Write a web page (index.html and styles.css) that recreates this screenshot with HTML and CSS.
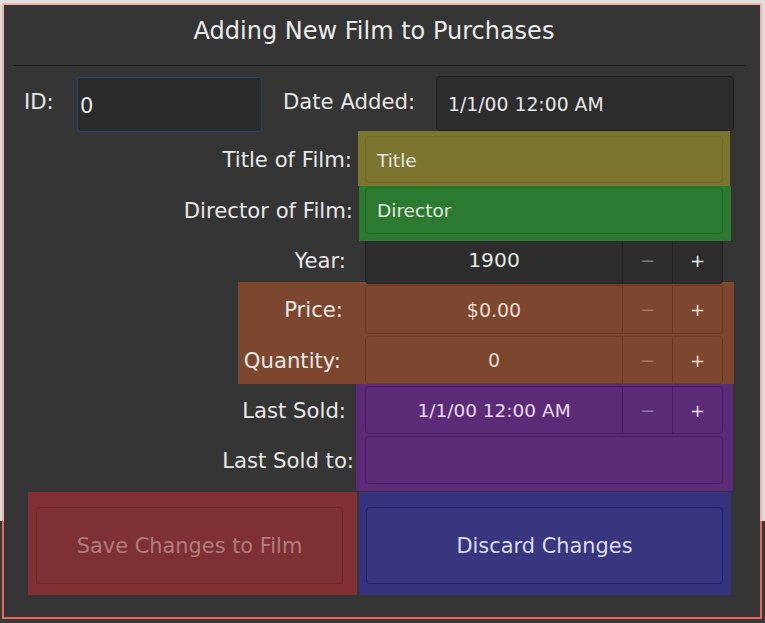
FILE: index.html
```html
<!DOCTYPE html>
<html>
<head>
<meta charset="utf-8">
<link rel="stylesheet" href="styles.css">
</head>
<body>
<div class="frame">
  <h1 class="title">Adding New Film to Purchases</h1>
  <div class="sep"></div>
  <div class="top-row">
    <span class="lbl id-lbl">ID:</span>
    <div class="id-input">0</div>
    <span class="lbl date-lbl">Date Added:</span>
    <div class="date-input">1/1/00 12:00 AM</div>
  </div>
  <div class="form">
    <div class="row row-title">
      <div class="lbl-cell">Title of Film:</div>
      <div class="cell olive"><div class="field">Title</div></div>
    </div>
    <div class="row row-director">
      <div class="lbl-cell">Director of Film:</div>
      <div class="cell green"><div class="field">Director</div></div>
    </div>
    <div class="row row-year">
      <div class="lbl-cell">Year:</div>
      <div class="spin spin-year">
        <div class="val val-year">1900</div>
        <div class="sbtn minus">−</div>
        <div class="sbtn plus">+</div>
      </div>
    </div>
    <div class="orange-block">
      <div class="sub-row sub-price">
        <div class="lbl-cell">Price:</div>
        <div class="spin spin-tint">
          <div class="val">$0.00</div>
          <div class="sbtn minus">−</div>
          <div class="sbtn plus">+</div>
        </div>
      </div>
      <div class="sub-row sub-qty">
        <div class="lbl-cell">Quantity:</div>
        <div class="spin spin-tint">
          <div class="val">0</div>
          <div class="sbtn minus">−</div>
          <div class="sbtn plus">+</div>
        </div>
      </div>
    </div>
    <div class="row row-lastsold">
      <div class="lbl-cell">Last Sold:</div>
      <div class="cell purple">
        <div class="spin spin-tint">
          <div class="val val-small">1/1/00 12:00 AM</div>
          <div class="sbtn minus">−</div>
          <div class="sbtn plus">+</div>
        </div>
      </div>
    </div>
    <div class="row row-lastsoldto">
      <div class="lbl-cell">Last Sold to:</div>
      <div class="cell purple"><div class="field field-tint"></div></div>
    </div>
  </div>
  <div class="buttons">
    <div class="btn-cell red"><div class="btn btn-save">Save Changes to Film</div></div>
    <div class="btn-cell blue"><div class="btn btn-discard">Discard Changes</div></div>
  </div>
</div>
</body>
</html>
```
FILE: styles.css
```css
* { box-sizing: border-box; }

html, body {
  margin: 0;
  padding: 0;
}

body {
  width: 765px;
  height: 623px;
  overflow: hidden;
  background: linear-gradient(to bottom, #dedede 0, #dedede 521px, #383838 521px);
  font-family: "DejaVu Sans", "Liberation Sans", sans-serif;
  color: #e8e8e8;
}

.frame {
  width: 760px;
  height: 616px;
  margin: 3px 0 0 2px;
  border: 2px solid transparent;
  background:
    linear-gradient(#353535, #353535) padding-box,
    linear-gradient(to bottom, #f5b2aa 0, #f5b2aa 518px, #e8685e 518px) border-box;
}

.title {
  margin: 0;
  height: 52px;
  line-height: 52px;
  padding-right: 16px;
  font-size: 24px;
  font-weight: normal;
  text-align: center;
  color: #ececec;
}

.sep {
  height: 1px;
  margin: 8px 15px 0 10px;
  background: #1c1c1c;
}

.top-row {
  display: flex;
  align-items: center;
  height: 55px;
  margin-top: 11px;
  padding-left: 20px;
}

.lbl {
  font-size: 21.2px;
  margin-bottom: 6px;
  white-space: nowrap;
}

.id-lbl { width: 53px; }

.id-input {
  width: 185px;
  height: 55px;
  background: #2b2b2b;
  border: 1px solid #234572;
  border-radius: 3px;
  font-size: 21px;
  padding-left: 2px;
  display: flex;
  align-items: center;
  padding-top: 2px;
}

.date-lbl { margin-left: 21px; }

.date-input {
  width: 298px;
  height: 55px;
  margin-left: 21px;
  margin-bottom: 2px;
  background: #2d2d2d;
  border: 1px solid #1d1d1d;
  border-radius: 4px;
  font-size: 18.8px;
  padding-left: 11px;
  padding-top: 2px;
  display: flex;
  align-items: center;
}

.form { margin-top: -1px; }

.row { display: flex; }

.lbl-cell {
  display: flex;
  align-items: center;
  justify-content: flex-end;
  font-size: 21.2px;
  white-space: nowrap;
}

.field {
  width: 358px;
  height: 47px;
  border-radius: 4px;
  border: 1px solid rgba(0, 0, 0, 0.1);
  font-size: 18.5px;
  padding-left: 11px;
  display: flex;
  align-items: center;
  color: #e6e6e0;
}

/* Title */
.row-title { height: 55px; }
.row-title .lbl-cell { width: 354px; padding-right: 6px; padding-top: 2px; }
.olive {
  width: 372px;
  background: #7b7530;
  padding: 5px 7px 3px 7px;
}
.olive .field { padding-top: 2px; }

/* Director */
.row-director { height: 55px; }
.row-director .lbl-cell { width: 355px; padding-right: 6px; padding-bottom: 6px; }
.green {
  width: 372px;
  background: #2b7a30;
  padding: 1px 8px 7px 6px;
}
.green .field { border-color: rgba(0, 40, 0, 0.2); }

/* spin boxes */
.spin {
  display: flex;
  width: 358px;
  height: 48px;
  border-radius: 4px;
  border: 1px solid rgba(0, 0, 0, 0.12);
}

.val {
  flex: 0 0 256px;
  display: flex;
  align-items: center;
  justify-content: center;
  font-size: 19px;
}

.val-small { font-size: 18.5px; }

.sbtn {
  flex: 1 1 50px;
  display: flex;
  align-items: center;
  justify-content: center;
  border-left: 1px solid rgba(0, 0, 0, 0.12);
  font-size: 18px;
}

.plus { color: #ececec; }

/* Year */
.row-year { height: 41px; align-items: flex-start; }
.row-year .lbl-cell { width: 355px; height: 41px; padding-right: 13px; padding-bottom: 2px; }
.spin-year {
  margin-left: 6px;
  height: 43px;
  background: #2d2d2d;
  border-color: #202020;
  border-top: none;
  border-radius: 0 0 4px 4px;
}
.spin-year .sbtn { border-left-color: #222222; }
.val-year { font-size: 20.3px; padding-bottom: 4px; }
.spin-year .sbtn { padding-bottom: 4px; }
.spin-year .minus { color: #7c7c7c; }

/* Orange */
.orange-block {
  margin-left: 234px;
  width: 496px;
  height: 102px;
  background: #7c472e;
  padding-top: 3px;
  display: flex;
  flex-direction: column;
  gap: 2px;
}
.sub-row { display: flex; }
.sub-row .lbl-cell { width: 121px; }
.sub-price .lbl-cell { padding-right: 16px; }
.sub-qty .lbl-cell { padding-right: 18px; }
.sub-row .spin { margin-left: 6px; }
.sub-price .spin { height: 49px; }
.orange-block .spin { border-color: rgba(90, 30, 0, 0.35); }
.orange-block .sbtn { border-left-color: rgba(90, 30, 0, 0.35); }
.orange-block .minus { color: #a67c66; }
.orange-block .val, .orange-block .plus { color: #ecdcd4; }

/* Purple */
.row-lastsold { height: 52px; }
.row-lastsold .lbl-cell { width: 352px; padding-right: 10px; }
.row-lastsoldto { height: 55px; }
.row-lastsoldto .lbl-cell { width: 352px; padding-right: 2px; padding-bottom: 7px; }
.purple {
  width: 377px;
  background: #5c2b78;
  padding-left: 9px;
}
.row-lastsold .purple { padding-top: 2px; }
.row-lastsoldto .purple { padding-bottom: 7px; }
.purple .spin, .purple .field { border-color: rgba(50, 0, 80, 0.4); }
.purple .sbtn { border-left-color: rgba(50, 0, 80, 0.4); }
.purple .minus { color: #9474a8; }
.purple .val, .purple .plus { color: #e8dcf0; }
.field-tint { height: 48px; }

/* Buttons */
.buttons {
  display: flex;
  gap: 2px;
  height: 103px;
  margin-top: 1px;
  margin-left: 24px;
}
.btn-cell { padding-top: 15px; padding-bottom: 11px; }
.red {
  width: 329px;
  background: #803033;
  padding-left: 8px;
  padding-right: 14px;
}
.blue {
  width: 372px;
  background: #35337e;
  padding-left: 7px;
  padding-right: 8px;
}
.btn {
  height: 77px;
  border-radius: 4px;
  display: flex;
  align-items: center;
  justify-content: center;
  font-size: 20.9px;
}
.btn-save {
  border: 1px solid #70252a;
  background: #7f3034;
  color: #b27c7e;
}
.btn-discard {
  border: 1px solid #1f1e78;
  background: #37367f;
  color: #dcdcf2;
}
```
